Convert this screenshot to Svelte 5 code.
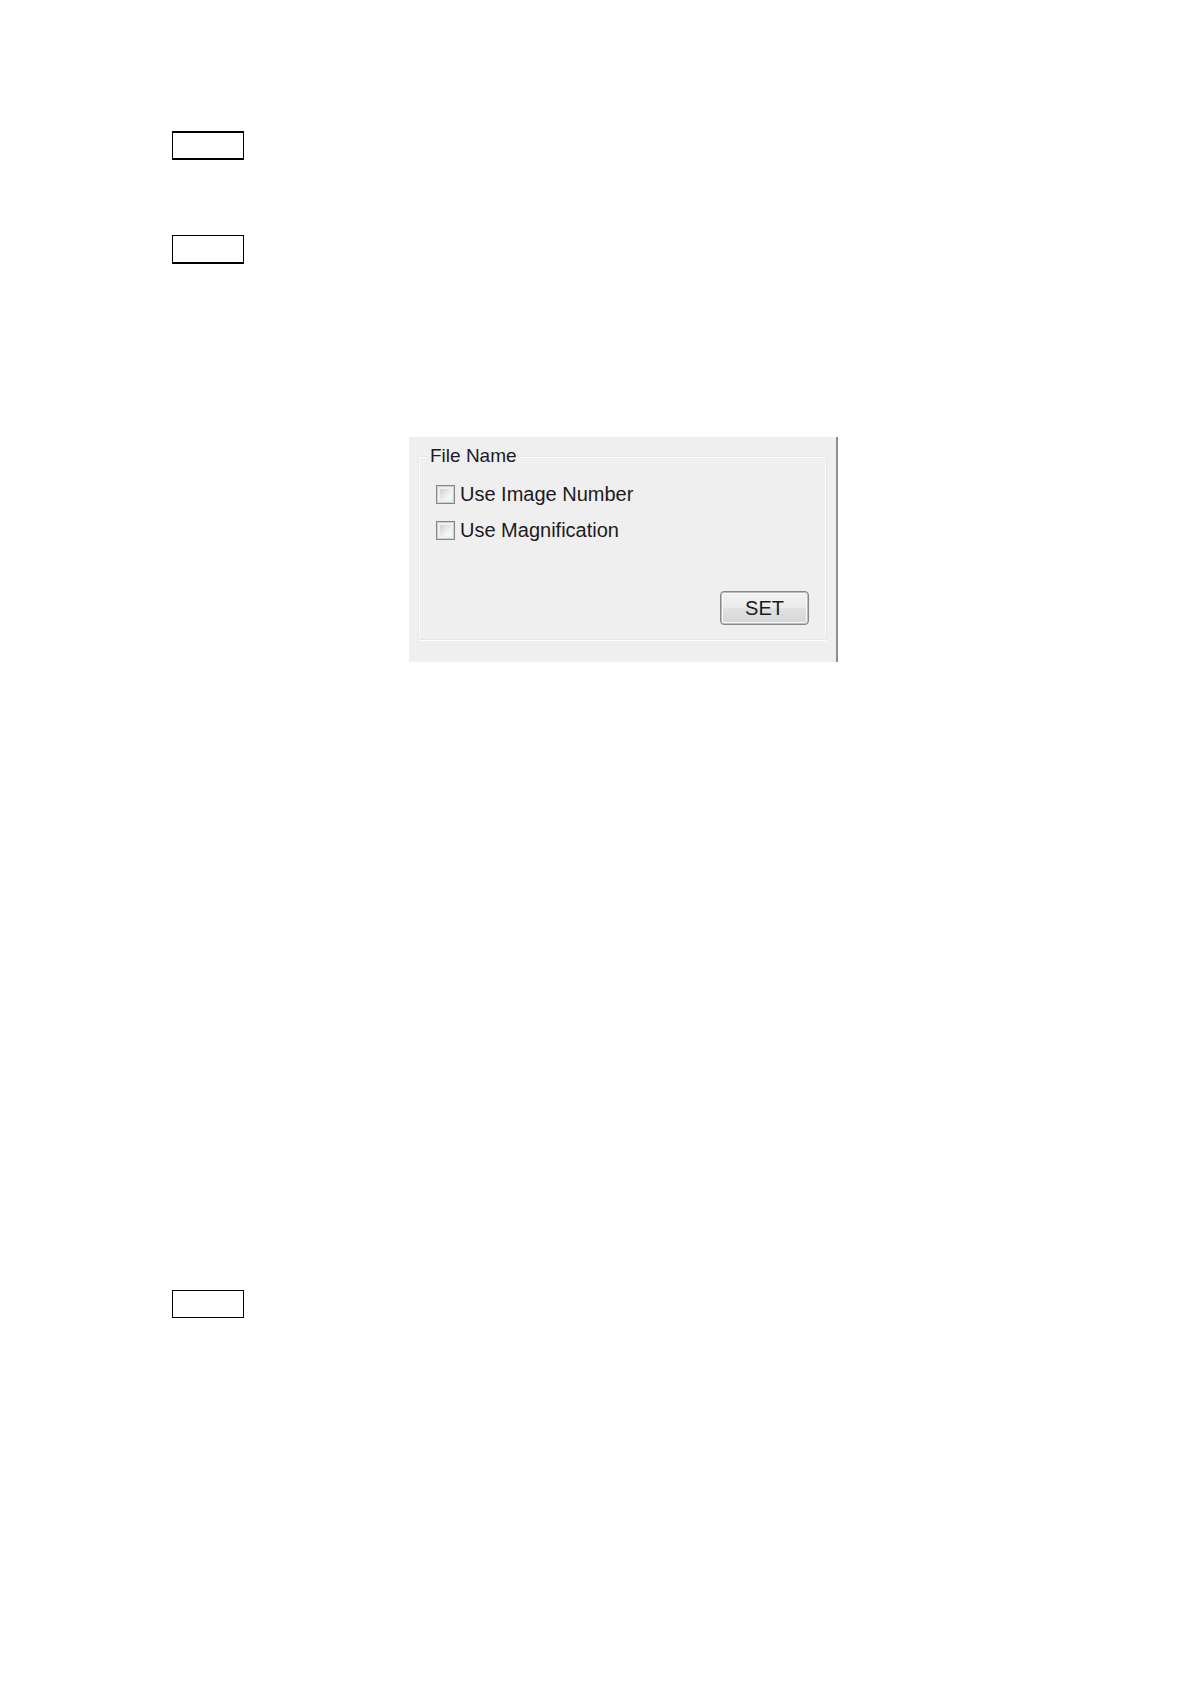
<script>
  let useImageNumber = $state(false);
  let useMagnification = $state(false);
</script>

<main>
  <div class="tag thick"></div>
  <div class="tag heavy-base"></div>

  <form class="panel" onsubmit={(event) => event.preventDefault()}>
    <fieldset>
      <legend>File Name</legend>
      <div class="options">
        <label>
          <input type="checkbox" bind:checked={useImageNumber} />
          <span>Use Image Number</span>
        </label>
        <label>
          <input type="checkbox" bind:checked={useMagnification} />
          <span>Use Magnification</span>
        </label>
      </div>
      <div class="actions">
        <button type="submit">SET</button>
      </div>
    </fieldset>
  </form>

  <div class="tag last"></div>
</main>

<style>
  :global(body) {
    margin: 0;
    background: #fff;
  }

  main {
    display: flex;
    flex-direction: column;
    align-items: flex-start;
    padding: 131px 115px 80px 172px;
    font-family: "Liberation Sans", Arial, sans-serif;
    color: #1c1a22;
  }

  .tag {
    box-sizing: border-box;
    width: 72px;
    height: 29px;
    border: 1px solid #000;
  }

  .thick {
    border-width: 2px 1px;
  }

  .heavy-base {
    margin-top: 75px;
    border-bottom-width: 2px;
  }

  .last {
    height: 28px;
    margin-top: 628px;
  }

  .panel {
    box-sizing: border-box;
    align-self: center;
    width: 100%;
    max-width: 429px;
    margin-top: 173px;
    padding: 8px 9px 22px 9px;
    border-right: 2px solid #8d8f8f;
    background: #efefef;
  }

  fieldset {
    min-width: 0;
    margin: 0;
    padding: 0 17px 14px 9px;
    border: 1px solid #e5e6e6;
    border-radius: 2px;
    box-shadow: inset 1px 1px #fbfbfb, 0 1px #fdfdfd, inset -1px 0 #fbfbfb;
  }

  legend {
    padding: 0 2px;
    background: #efefef;
    font-size: 19px;
    line-height: 22px;
  }

  .options {
    display: flex;
    flex-direction: column;
    align-items: flex-start;
    gap: 12px;
    padding: 15px 0 0 8px;
  }

  label {
    display: flex;
    align-items: center;
    gap: 5px;
    font-size: 20px;
    line-height: 24px;
  }

  input {
    appearance: none;
    box-sizing: border-box;
    flex: none;
    width: 19px;
    height: 19px;
    margin: 0;
    padding: 3px;
    border: 1px solid #858687;
    background: linear-gradient(135deg, #cdcfd1, #f6f6f6 75%) content-box, #efefef;
    box-shadow: inset 0 0 0 1px #d0d1d1;
  }

  input:checked {
    background: #4b5c80 content-box, #f4f4f4;
  }

  .actions {
    display: flex;
    justify-content: flex-end;
    margin-top: 49px;
  }

  button {
    box-sizing: border-box;
    min-width: 89px;
    height: 34px;
    padding: 0 24px;
    border: 1px solid #868787;
    border-radius: 4px;
    background: linear-gradient(#f3f3f3, #ebebeb 50%, #e0e0e0 52%, #d6d6d6);
    box-shadow: inset 0 0 0 1px #bcbdbd, inset 0 0 0 2px #f8f8f8;
    color: inherit;
    font-family: inherit;
    font-size: 20px;
    line-height: 24px;
  }
</style>
